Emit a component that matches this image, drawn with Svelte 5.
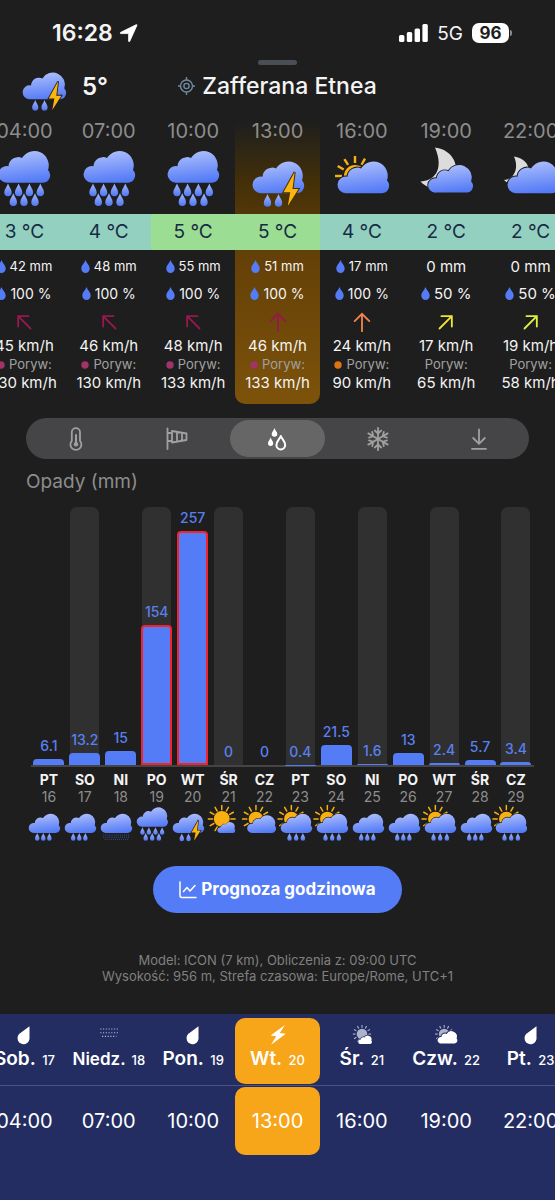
<script>
    const hours = [
        { time: '04:00', icon: 'heavy', temp: 3, rain: 42, chance: 100, dir: -45, color: '#96184f', wind: 45, gust: 130, dot: '#a03468' },
        { time: '07:00', icon: 'heavy', temp: 4, rain: 48, chance: 100, dir: -45, color: '#96184f', wind: 46, gust: 130, dot: '#a03468' },
        { time: '10:00', icon: 'heavy', temp: 5, rain: 55, chance: 100, dir: -45, color: '#96184f', wind: 48, gust: 133, dot: '#a03468' },
        { time: '13:00', icon: 'storm', temp: 5, rain: 51, chance: 100, dir: 0, color: '#96184f', wind: 46, gust: 133, dot: '#a03468' },
        { time: '16:00', icon: 'partly', temp: 4, rain: 17, chance: 100, dir: 0, color: '#f5834a', wind: 24, gust: 90, dot: '#dc7414' },
        { time: '19:00', icon: 'moon', temp: 2, rain: 0, chance: 50, dir: 45, color: '#f3e335', wind: 17, gust: 65 },
        { time: '22:00', icon: 'moonsmall', temp: 2, rain: 0, chance: 50, dir: 45, color: '#dff03c', wind: 19, gust: 58 }
    ];

    const days = [
        { name: 'PT', date: 16, mm: 6.1, icon: 'light' },
        { name: 'SO', date: 17, mm: 13.2, icon: 'light' },
        { name: 'NI', date: 18, mm: 15, icon: 'drizzle' },
        { name: 'PO', date: 19, mm: 154, icon: 'heavy' },
        { name: 'WT', date: 20, mm: 257, icon: 'storm' },
        { name: 'ŚR', date: 21, mm: 0, icon: 'sun' },
        { name: 'CZ', date: 22, mm: 0, icon: 'suncloud' },
        { name: 'PT', date: 23, mm: 0.4, icon: 'sunrain' },
        { name: 'SO', date: 24, mm: 21.5, icon: 'sunrain' },
        { name: 'NI', date: 25, mm: 1.6, icon: 'light' },
        { name: 'PO', date: 26, mm: 13, icon: 'light' },
        { name: 'WT', date: 27, mm: 2.4, icon: 'sunrain' },
        { name: 'ŚR', date: 28, mm: 5.7, icon: 'light' },
        { name: 'CZ', date: 29, mm: 3.4, icon: 'sunrain' }
    ];

    const navDays = [
        { name: 'Sob.', date: 17, icon: 'drop' },
        { name: 'Niedz.', date: 18, icon: 'dots' },
        { name: 'Pon.', date: 19, icon: 'drop' },
        { name: 'Wt.', date: 20, icon: 'bolt' },
        { name: 'Śr.', date: 21, icon: 'sun' },
        { name: 'Czw.', date: 22, icon: 'suncloud' },
        { name: 'Pt.', date: 23, icon: 'drop' }
    ];

    const tabs = [
        { id: 'temp', label: 'Temperatura' },
        { id: 'wind', label: 'Wiatr' },
        { id: 'rain', label: 'Opady' },
        { id: 'snow', label: 'Śnieg' },
        { id: 'pressure', label: 'Ciśnienie' }
    ];

    const scaleMax = 283;
    const cloud = 'M8.5 33.7A8.3 8.3 0 1 1 9.5 17.3A9.5 9.5 0 0 1 23 9A14.4 14.4 0 0 1 49 21A7.5 7.5 0 0 1 44 33.7Z';
    const drop = 'M0 0C1 3.2 3.7 5.6 3.7 9A3.7 3.7 0 0 1-3.7 9C-3.7 5.6-1 3.2 0 0Z';
    const rays = [0, 30, 60, 90, 120, 150, 180, 210, 240, 270, 300, 330];

    let tab = $state('rain');
    let day = $state(3);
    let hour = $state(3);
</script>

{#snippet drops(points)}
    {#each points as [x, y]}
        <path d={drop} transform="translate({x} {y})" fill="url(#dropFill)" />
    {/each}
{/snippet}

{#snippet sun(x, y, r, inner, outer)}
    <g transform="translate({x} {y})">
        <circle {r} fill="#f9b010" />
        {#each rays as a}
            <path d="M0 {-inner}V{-outer}" transform="rotate({a})" stroke="#f9b010" stroke-width="2.4" stroke-linecap="round" />
        {/each}
    </g>
{/snippet}

{#snippet weather(kind)}
    <svg class="weather" viewBox="0 0 51 57" aria-hidden="true">
        {#if kind === 'heavy'}
            <path d={cloud} fill="url(#cloudFill)" />
            {@render drops([[9, 34.5], [19.6, 34.5], [30.4, 34.5], [41.3, 34.5], [14.3, 44.3], [25, 44.3], [36, 44.3]])}
        {:else if kind === 'light'}
            <path d={cloud} transform="translate(0 10.5)" fill="url(#cloudFill)" />
            {@render drops([[13.5, 44.3], [23.5, 44.3], [33.5, 44.3]])}
        {:else if kind === 'drizzle'}
            <path d={cloud} transform="translate(0 10.5)" fill="url(#cloudFill)" />
            <path d="M4 47.5H48M4 51H48M6 54.5H46" stroke="#5478e8" stroke-width="1.2" stroke-dasharray="1.2 2.2" />
        {:else if kind === 'storm'}
            <path d={cloud} transform="translate(0 10.5)" fill="url(#cloudFill)" />
            {@render drops([[14.5, 45], [25.5, 45]])}
            <path class="cut" d="M41.7 23L30.5 43.2H37.2L34.8 57L45.5 40H39.5Z" fill="#fcb40e" />
        {:else if kind === 'partly'}
            <g transform="translate(18 27)">
                <circle r="11" fill="#f9b010" />
                {#each [-90, -60, -32, 0, 30] as a}
                    <path d="M0 -13V-20" transform="rotate({a})" stroke="#f9b010" stroke-width="2.4" />
                {/each}
            </g>
            <path class="cut" d={cloud} transform="translate(1 10.5)" fill="url(#cloudFill)" />
        {:else if kind === 'moon'}
            <path d="M14-1.5C27 0 36 10 35 22C33 38 12 46-.5 32.5C12 32 24 22 14-1.5Z" fill="#dcdcdc" />
            <path class="cut" d={cloud} transform="translate(7.5 14.3) scale(.87)" fill="url(#cloudFill)" />
        {:else if kind === 'moonsmall'}
            <path d="M8 7.5C17 9 23 14 23 23C22 35 7 40-2 31C6 31 14 21 8 7.5Z" fill="#dcdcdc" />
            <path class="cut" d={cloud} transform="translate(2 10.5)" fill="url(#cloudFill)" />
        {:else if kind === 'sun'}
            {@render sun(21, 21, 13, 15, 22)}
            <path class="cut" d={cloud} transform="translate(14 25) scale(.57)" fill="url(#cloudFill)" />
        {:else if kind === 'suncloud'}
            {@render sun(18, 21, 12, 15, 22)}
            <path class="cut" d={cloud} transform="translate(4 13) scale(.92)" fill="url(#cloudFill)" />
        {:else}
            {@render sun(17, 21, 12, 15, 22)}
            <path class="cut" d={cloud} transform="translate(0 10.5)" fill="url(#cloudFill)" />
            {@render drops([[14, 44.3], [25, 44.3], [36, 44.3]])}
        {/if}
    </svg>
{/snippet}

{#snippet blueDrop()}
    <svg class="blue-drop" viewBox="0 0 9 13" aria-hidden="true">
        <path d="M4.5 0C5.5 3 8.7 5.3 8.7 8.7A4.2 4.2 0 0 1 .3 8.7C.3 5.3 3.5 3 4.5 0Z" fill="#547cf6" />
    </svg>
{/snippet}

{#snippet navIcon(kind)}
    <svg class="nav-icon" viewBox="0 0 24 24" aria-hidden="true">
        {#if kind === 'drop'}
            <path d="M18 2.5L8.5 9.6A6.6 6.6 0 1 0 18 14.2Z" fill="#fff" />
        {:else if kind === 'dots'}
            <path d="M2.5 5.5H22M2.5 9.5H22M4.5 13.5H20" stroke="#b9bfdc" stroke-width="1.2" stroke-dasharray="1.2 1.8" />
        {:else if kind === 'bolt'}
            <path d="M19.5 1L4 12.5L10 13.3L4.5 22.5L20.5 10.5L14 9.8Z" fill="#fff" />
        {:else}
            <g transform="translate({kind === 'sun' ? 12 : 10} 11)">
                <circle r="5.8" fill="#aeb3cb" />
                {#each rays as a}
                    <path d="M0 -7V-10" transform="rotate({a})" stroke="#aeb3cb" stroke-width="1.2" />
                {/each}
            </g>
            {#if kind === 'sun'}
                <path class="navy-cut" d={cloud} transform="translate(8 12) scale(.29)" fill="#fff" />
            {:else}
                <path class="navy-cut" d={cloud} transform="translate(3 7) scale(.42)" fill="#fff" />
            {/if}
        {/if}
    </svg>
{/snippet}

<svg class="defs" aria-hidden="true">
    <defs>
        <linearGradient id="cloudFill" x1=".4" y1="0" x2=".6" y2="1">
            <stop offset="0" stop-color="#adbffd" />
            <stop offset="1" stop-color="#5279f6" />
        </linearGradient>
        <linearGradient id="dropFill" x1="0" y1="0" x2="0" y2="1">
            <stop offset="0" stop-color="#a5b9fb" />
            <stop offset="1" stop-color="#4f76f2" />
        </linearGradient>
    </defs>
</svg>

<div class="app">
    <div class="status">
        <div class="clock">
            16:28
            <svg width="19" height="19" viewBox="0 0 19 19"><path d="M18 1.2L10.8 17.2C10.4 18 9.6 17.8 9.6 17V9.6H2C1.1 9.6 1 8.7 1.8 8.3L17 .8C17.7 .5 18.3 .7 18 1.2Z" fill="#fff" stroke="#fff" stroke-width=".8" stroke-linejoin="round" /></svg>
        </div>
        <div class="signal">
            <svg width="29" height="19" viewBox="0 0 29 19" fill="#fff">
                <rect x="0" y="11" width="5.4" height="7" rx="1.5" />
                <rect x="7.8" y="8" width="5.4" height="10" rx="1.5" />
                <rect x="15.6" y="4.5" width="5.4" height="13.5" rx="1.5" />
                <rect x="23.4" y="0" width="5.4" height="18" rx="1.5" />
            </svg>
            <span>5G</span>
            <div class="battery">96</div>
        </div>
    </div>
    <div class="handle"></div>

    <header>
        <div class="now">{@render weather('storm')}<span>5°</span></div>
        <h1>
            <svg width="17" height="18" viewBox="0 0 17 18" fill="none" stroke="#7089a1" stroke-width="1.4">
                <circle cx="8.5" cy="9" r="6" />
                <circle cx="8.5" cy="9" r="2.6" />
                <path d="M8.5 0V3M8.5 15V18M0 9H2.5M14.5 9H17" />
            </svg>
            Zafferana Etnea
        </h1>
    </header>

    <section class="hours">
        {#each hours as h, i}
            <div class="hour" class:selected={i === 3}>
                <div class="time">{h.time}</div>
                {@render weather(h.icon)}
                <div class="temp" class:warm={h.temp >= 5}>{h.temp} °C</div>
                <div class="rain" class:dry={!h.rain}>
                    {#if h.rain}{@render blueDrop()}{/if}{h.rain} mm
                </div>
                <div class="chance" class:full={h.chance === 100}>{@render blueDrop()}{h.chance} %</div>
                <svg class="arrow" viewBox="0 0 24 24">
                    <path d="M12 22V3M4 11L12 3L20 11" transform="rotate({h.dir} 12 12)" fill="none" stroke={h.color} stroke-width="2" stroke-linecap="round" />
                </svg>
                <div class="wind">{h.wind} km/h</div>
                <div class="gust">
                    {#if h.dot}<svg width="8" height="8" viewBox="0 0 8 8"><circle cx="4" cy="4" r="3.7" fill={h.dot} /></svg>{/if}Poryw:
                </div>
                <div class="wind">{h.gust} km/h</div>
            </div>
        {/each}
    </section>

    <div class="tabs">
        {#each tabs as t}
            <button class:active={tab === t.id} aria-label={t.label} onclick={() => (tab = t.id)}>
                <svg width="24" height="24" viewBox="0 0 24 24" fill="none" stroke="currentColor" stroke-width="1.8" stroke-linecap="round" stroke-linejoin="round">
                    {#if t.id === 'temp'}
                        <path d="M7.8 13.8V5.3A4.1 4.1 0 0 1 16 5.3V13.8A5.5 5.5 0 1 1 7.8 13.8Z" />
                        <path d="M12 8V16" stroke-width="2" />
                        <circle cx="12" cy="17.3" r="2.2" fill="currentColor" stroke="none" />
                    {:else if t.id === 'wind'}
                        <path d="M2.5 1.5V22M2.5 6H7M2.5 14H7M7 4L21.5 6.5V13L7 15.5ZM12 5V14.5M17 5.8V13.8" />
                    {:else if t.id === 'rain'}
                        <path d="M9.5 1C10.2 3.5 12.3 5 12.3 7A2.8 2.8 0 0 1 6.7 7C6.7 5 8.8 3.5 9.5 1Z" fill="currentColor" stroke="none" />
                        <path d="M5.6 10.5C6.2 12.8 8.2 14.3 8.2 16.3A2.6 2.6 0 0 1 3 16.3C3 14.3 5 12.8 5.6 10.5Z" fill="currentColor" stroke="none" />
                        <path d="M15.8 9C16.7 11.7 20.2 14.3 20.2 18A4.4 4.4 0 0 1 11.4 18C11.4 14.3 14.9 11.7 15.8 9Z" stroke-width="2" />
                    {:else if t.id === 'snow'}
                        {#each [0, 60, 120, 180, 240, 300] as a}
                            <path d="M12 12V.8M8.8 3.5L12 6.5L15.2 3.5" transform="rotate({a} 12 12)" />
                        {/each}
                    {:else}
                        <path d="M12 2.5V16.5M6.2 11L12 16.8L17.8 11M5 21.8H19" />
                    {/if}
                </svg>
            </button>
        {/each}
    </div>

    <h2>Opady (mm)</h2>

    <section class="chart">
        {#each days as d, i}
            <div class="day">
                <div class="column">
                    <div class="track" class:shaded={i % 2 === 1}>
                        <span class="value">{d.mm}</span>
                        <div class="bar" class:alert={d.mm > 100} style="height: {(d.mm / scaleMax) * 100}%"></div>
                    </div>
                </div>
                <strong>{d.name}</strong>
                <span class="date">{d.date}</span>
                {@render weather(d.icon)}
            </div>
        {/each}
    </section>

    <button class="hourly">
        <svg width="18" height="18" viewBox="0 0 18 18" fill="none" stroke="#fff" stroke-width="1.5" stroke-linecap="round" stroke-linejoin="round">
            <path d="M1 1V14.5Q1 16.5 3 16.5H17M4.5 10.5L8 6.5L11 10L16 4.5" />
        </svg>
        Prognoza godzinowa
    </button>

    <p class="info">
        Model: ICON (7 km), Obliczenia z: 09:00 UTC<br />
        Wysokość: 956 m, Strefa czasowa: Europe/Rome, UTC+1
    </p>

    <nav>
        <div class="nav-row nav-days">
            {#each navDays as d, i}
                <button class:picked={day === i} onclick={() => (day = i)}>
                    {@render navIcon(d.icon)}
                    <span class="label" class:long={d.name.length > 5}>{d.name} <small>{d.date}</small></span>
                </button>
            {/each}
        </div>
        <div class="nav-row nav-hours">
            {#each hours as h, i}
                <button class:picked={hour === i} onclick={() => (hour = i)}>{h.time}</button>
            {/each}
        </div>
    </nav>
</div>

<style>
    :global(body) {
        background-color: #1e1e1e;
    }

    .app {
        display: flex;
        flex-direction: column;
        min-height: 100vh;
        overflow: hidden;
        background-color: #1e1e1e;
        color: #f4f4f4;
        font-family: Inter, "Liberation Sans", sans-serif;
    }

    button {
        border: 0;
        padding: 0;
        background: none;
        color: inherit;
        font-family: inherit;
        cursor: pointer;
    }

    svg {
        display: block;
        flex: none;
        overflow: visible;
    }

    .defs {
        position: absolute;
        width: 0;
        height: 0;
    }

    .cut {
        stroke: #1e1e1e;
        stroke-width: 2;
        paint-order: stroke;
    }

    .navy-cut {
        stroke: #232d62;
        stroke-width: 5;
        paint-order: stroke;
    }

    .status {
        display: flex;
        justify-content: space-between;
        align-items: center;
        height: 26px;
        padding: 20px 46px 0 52px;
    }

    .clock {
        display: flex;
        align-items: center;
        gap: 6px;
        font-size: 23px;
        font-weight: 600;
    }

    .signal {
        display: flex;
        align-items: center;
        gap: 9px;
        font-size: 19px;
    }

    .battery {
        position: relative;
        width: 37px;
        border-radius: 7px;
        background-color: #fff;
        color: #1e1e1e;
        font-size: 17px;
        font-weight: 700;
        line-height: 20px;
        text-align: center;
    }

    .battery::after {
        content: "";
        position: absolute;
        top: 7px;
        right: -3px;
        width: 2px;
        height: 6px;
        border-radius: 0 2px 2px 0;
        background-color: #8a8a8a;
    }

    .handle {
        width: 39px;
        height: 5px;
        margin: 14px auto 0;
        border-radius: 3px;
        background-color: #4a4f55;
    }

    header {
        display: grid;
        grid-template-columns: 1fr auto 1fr;
        align-items: center;
        height: 44px;
        margin-top: -3px;
    }

    .now {
        display: flex;
        align-items: center;
        gap: 16px;
        padding-left: 23px;
        font-size: 24px;
        font-weight: 600;
    }

    .now .weather {
        width: 43px;
        height: 48px;
    }

    h1 {
        display: flex;
        align-items: center;
        gap: 7px;
        margin: 0;
        font-size: 23px;
        font-weight: 500;
    }

    .hours {
        display: flex;
        justify-content: center;
        margin-top: 15px;
    }

    .hour {
        display: flex;
        flex: 0 0 15.2%;
        flex-direction: column;
        align-items: center;
        height: 283px;
        white-space: nowrap;
    }

    .hour.selected {
        border-radius: 0 0 10px 10px;
        background: linear-gradient(#1e1e1e, #443008 22%, #634008 46%, #7d530b);
    }

    .hour.selected .cut {
        stroke: #443008;
    }

    .time {
        color: #8d8d8d;
        font-size: 20px;
        line-height: 20px;
    }

    .hour .weather {
        width: 51px;
        height: 57px;
        margin: 8px 0 8px 1px;
    }

    .temp {
        align-self: stretch;
        background-color: #93d0bf;
        color: #172b44;
        font-size: 19px;
        line-height: 36px;
        text-align: center;
    }

    .temp.warm {
        background-color: #9bdd93;
    }

    .rain,
    .chance {
        display: flex;
        align-items: center;
        gap: 4px;
        font-size: 15px;
        line-height: 27px;
    }

    .rain {
        margin-top: 3px;
        font-size: 13px;
    }

    .rain.dry {
        font-size: 15px;
    }

    .chance.full {
        font-size: 14px;
    }

    .blue-drop {
        width: 9px;
        height: 13px;
    }

    .arrow {
        width: 22px;
        height: 22px;
        margin: 4px 0 3px;
    }

    .wind {
        font-size: 15px;
        line-height: 20px;
    }

    .gust {
        display: flex;
        align-items: center;
        gap: 4px;
        color: #a2a2a2;
        font-size: 13px;
        line-height: 17px;
    }

    .tabs {
        display: flex;
        margin: 14px 26px 0;
        padding: 2px 0;
        border-radius: 21px;
        background-color: #454547;
        color: #a0a0a0;
    }

    .tabs button {
        display: flex;
        flex: 1;
        justify-content: center;
        align-items: center;
        height: 37px;
        margin: 0 3px;
        border-radius: 19px;
    }

    .tabs .active {
        background-color: #666;
        color: #fff;
    }

    h2 {
        margin: 10px 26px 0;
        color: #8d8d8d;
        font-size: 19px;
        font-weight: 400;
        line-height: 26px;
    }

    .chart {
        display: flex;
        margin: 12px 21px 0 31px;
    }

    .day {
        display: flex;
        flex: 1;
        min-width: 0;
        flex-direction: column;
        align-items: center;
    }

    .column {
        display: flex;
        justify-content: center;
        align-self: stretch;
        border-bottom: 2px solid #444;
    }

    .track {
        display: flex;
        flex-direction: column;
        justify-content: flex-end;
        align-items: center;
        width: 29px;
        height: 258px;
        border-radius: 7px 7px 0 0;
        color: #5a80f0;
        font-size: 14px;
        font-weight: 500;
    }

    .track.shaded {
        background-color: #303030;
    }

    .value {
        flex: none;
        line-height: 26px;
    }

    .bar {
        flex: none;
        box-sizing: border-box;
        width: 31px;
        border-radius: 4px 4px 0 0;
        background-color: #547cf6;
    }

    .bar.alert {
        border: 2px solid #f5222b;
    }

    .day strong {
        margin-top: 4px;
        font-size: 14px;
        line-height: 18px;
    }

    .date {
        color: #8d8d8d;
        font-size: 14px;
        line-height: 16px;
    }

    .day .weather {
        width: 31px;
        height: 35px;
        margin: 1px 8px 0 0;
    }

    .hourly {
        display: flex;
        align-items: center;
        align-self: center;
        gap: 4px;
        margin-top: 25px;
        padding: 0 26px;
        border-radius: 24px;
        background-color: #547cf6;
        color: #fff;
        font-size: 17px;
        font-weight: 700;
        line-height: 47px;
    }

    .info {
        margin: 39px 0 30px;
        color: #808080;
        font-size: 13px;
        line-height: 16px;
        text-align: center;
    }

    nav {
        flex: 1;
        background-color: #232d62;
        color: #fff;
    }

    .nav-row {
        display: flex;
        justify-content: center;
    }

    .nav-row button {
        flex: 0 0 15.2%;
        border-radius: 10px;
        white-space: nowrap;
    }

    .nav-row .picked {
        background-color: #f7a519;
    }

    .nav-days {
        padding: 4px 0 1px;
        border-bottom: 1px solid #4a5280;
    }

    .nav-days button {
        display: flex;
        flex-direction: column;
        align-items: center;
        height: 66px;
        padding-top: 6px;
    }

    .nav-icon {
        width: 22px;
        height: 22px;
    }

    .label {
        font-size: 19px;
        font-weight: 600;
        line-height: 26px;
    }

    .label small {
        margin-left: 2px;
        font-size: 13px;
        font-weight: 500;
    }

    .label.long {
        font-size: 17px;
    }

    .nav-hours {
        padding-top: 1px;
    }

    .nav-hours button {
        height: 68px;
        font-size: 20px;
    }
</style>
